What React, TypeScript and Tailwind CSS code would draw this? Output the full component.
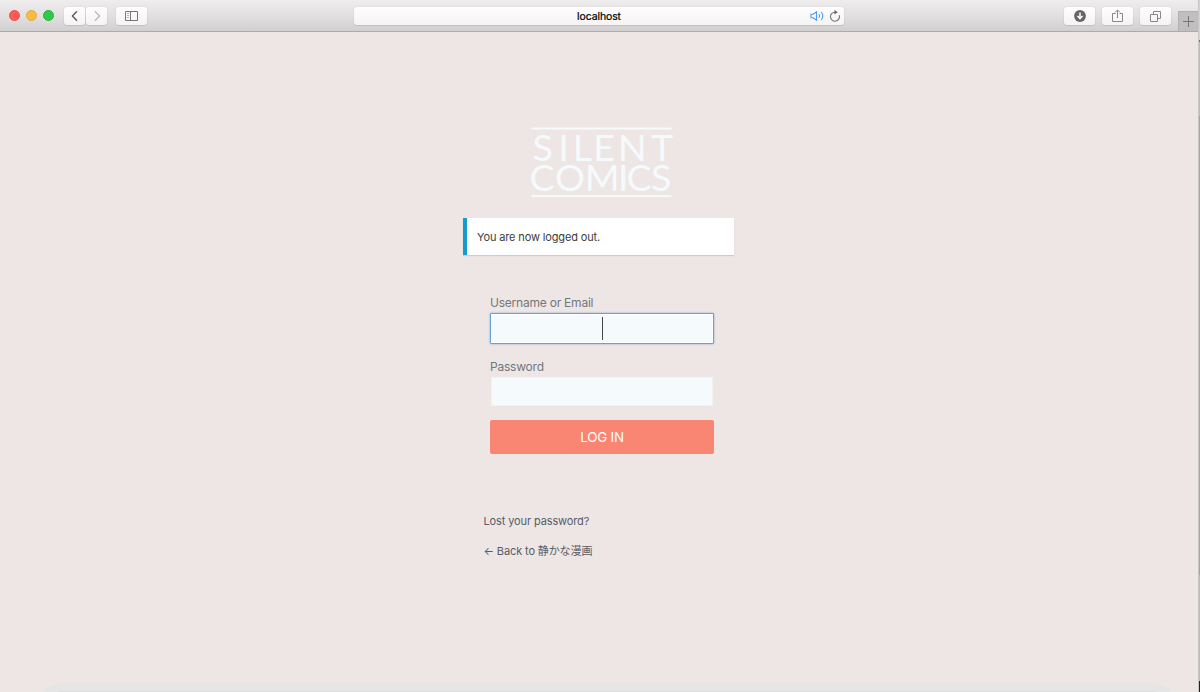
const btn = "flex h-[18px] shrink-0 items-center justify-center rounded-[3px] bg-gradient-to-b from-white to-[#f5f3f3] shadow-[0_0_1px_rgba(0,0,0,0.25),0_1px_1px_rgba(0,0,0,0.08)]";

function Toolbar() {
  return (
    <header className="flex h-8 w-[1198px] shrink-0 items-start rounded-tr-[5px] border-b border-[#ababab] bg-gradient-to-b from-[#efedee] via-[#e2e0e1] to-[#d1cfd0] pt-[7px]">
      <div className="ml-[9px] mt-[3px] flex gap-[6px]">
        <span className="size-[11px] rounded-full border-[0.5px] border-[#e4534f] bg-[#fc5b57]" />
        <span className="size-[11px] rounded-full border-[0.5px] border-[#e5aa38] bg-[#fdbb3f]" />
        <span className="size-[11px] rounded-full border-[0.5px] border-[#28b53c] bg-[#30c848]" />
      </div>
      <div className="ml-[10px] flex gap-px">
        <div className={`${btn} w-[21px]`}>
          <svg width="8" height="12" viewBox="0 0 8 12" fill="none" stroke="#555" strokeWidth="1.3"><path d="M6 1.2 1.4 6 6 10.8" /></svg>
        </div>
        <div className={`${btn} w-[21px]`}>
          <svg width="8" height="12" viewBox="0 0 8 12" fill="none" stroke="#b8b8b8" strokeWidth="1.3"><path d="M2 1.2 6.6 6 2 10.8" /></svg>
        </div>
      </div>
      <div className={`${btn} ml-[9px] w-[31px]`}>
        <svg width="13" height="10" viewBox="0 0 13 10" fill="none" stroke="#777"><path d="M.5.5h12v9H.5zM5.5.5v9" /><path d="M2 2.5h2M2 4.5h2M2 6.5h2" stroke="#a0a0a0" strokeWidth=".8" /></svg>
      </div>
      <div className={`${btn} relative ml-[207px] w-[490px] text-[10.5px] text-black`}>
        <span className="mt-px tracking-[-0.12px] [-webkit-text-stroke:0.2px_black]">localhost</span>
        <svg className="absolute left-[456px] top-[4px]" width="15" height="10" viewBox="0 0 15 10" fill="none" stroke="#4c9bee" strokeWidth="1.1"><path d="M1 3.3h2.2L6.5.8v8.4L3.2 6.7H1zM8.9 3.2q1.3 1.8 0 3.6M11.2 1q3.2 4 0 8" /></svg>
        <svg className="absolute left-[475px] top-[3px]" width="12" height="12" viewBox="0 0 12 12" fill="none" stroke="#747474" strokeWidth="1.1"><path d="M10.2 5.2A4.5 4.5 0 1 1 6 2.2" /><path d="M5.4 0 8.8 2.3 5.4 4.6z" fill="#666" stroke="none" /></svg>
      </div>
      <div className={`${btn} ml-[220px] w-[31px]`}>
        <svg width="12" height="12" viewBox="0 0 12 12"><circle cx="6" cy="6" r="5.9" fill="#656565" /><path d="M6 2.5v6M3.5 6 6 8.6 8.5 6" fill="none" stroke="white" strokeWidth="1.5" /></svg>
      </div>
      <div className={`${btn} ml-[7px] w-[31px]`}>
        <svg width="11" height="14" viewBox="0 0 11 14" fill="none" stroke="#888"><path d="M3.5 4.5h-3v8h10v-8h-3M5.5 9V1M3 3.4 5.5.9 8 3.4" /></svg>
      </div>
      <div className={`${btn} ml-[7px] w-[31px]`}>
        <svg width="11" height="11" viewBox="0 0 11 11" fill="none" stroke="#888"><path d="M.5 3.5h7v7h-7zM3.5 3.5v-3h7v7h-3" /></svg>
      </div>
      <div className="ml-[7px] mt-1 flex h-5 w-5 items-center justify-center border-l border-t border-[#b2b0b1] bg-[#c0bebf]">
        <svg width="11" height="11" viewBox="0 0 11 11" stroke="#777"><path d="M0 5.5h11M5.5 0v11" /></svg>
      </div>
    </header>
  );
}

function Logo() {
  return (
    <svg className="ml-[531px] mt-[95px] block shrink-0 overflow-visible" width="141" height="71" viewBox="0 0 141 71" fill="#f5fafc" fontFamily="Lato" fontSize="37.5" role="img" aria-label="Silent Comics">
      <rect x="0.5" y="0.6" width="140" height="1.9" />
      <text y="34" x="1.5 27.2 41.8 62.2 87 120">SILENT</text>
      <text y="64" x="-1.5 24 53.8 87 95.5 120">COMICS</text>
      <rect x="0.5" y="68.2" width="140" height="1.9" />
    </svg>
  );
}

export default function App() {
  return (
    <div className="flex h-[692px] w-[1200px] overflow-hidden bg-[#d5d3d4] font-['Inter','Noto_Sans_CJK_JP',sans-serif]">
      <div className="flex w-[1198px] shrink-0 flex-col bg-[#eee6e5]">
        <Toolbar />
        <Logo />
        <div className="ml-[463px] mt-[20px] flex h-[37px] w-[271px] shrink-0 items-center border-l-4 border-[#129dd0] bg-white pl-[10px] pt-px text-[11px] tracking-[-0.14px] text-[#3c3e40] shadow-[0_1px_1px_rgba(0,0,0,0.12)]">You are now logged out.</div>
        <form className="ml-[490px] mt-[40px] flex w-[224px] shrink-0 flex-col text-[12px] leading-[16px] tracking-[-0.22px] text-[#72777c]">
          <label>Username or Email</label>
          <div className="mt-[2px] flex h-[31px] items-center justify-center rounded-[1px] border border-[#64a3d8] bg-[#f5fafd] shadow-[0_0_2px_rgba(80,150,215,0.8),inset_0_0_0_1px_white]">
            <span className="ml-px h-[23px] w-px bg-[#444]" />
          </div>
          <label className="mt-[15px]">Password</label>
          <div className="ml-px mt-[2px] h-[29px] w-[222px] border border-[#f2f2f2] bg-[#f5fafd]" />
          <button type="button" className="mt-[14px] h-[34px] rounded-[2px] bg-[#f98573] text-[13.4px] text-white">LOG IN</button>
        </form>
        <nav className="ml-[483.5px] mt-[59px] flex flex-col gap-[14px] text-[11px] leading-4 tracking-[-0.12px] text-[#555d66]">
          <a>Lost your password?</a>
          <a>← Back to 静かな漫画</a>
        </nav>
        <svg className="mt-auto block shrink-0" width="1198" height="9" viewBox="0 0 1198 9"><path d="M42 9Q52 0 64 0H1151Q1166 3 1174 9z" fill="#e5e5e5" /><path d="M57 9 61 8H1154l4 1z" fill="#dedede" /></svg>
      </div>
      <div className="flex w-[2px] shrink-0 flex-col border-l border-[#c9c6c6]">
        <span className="h-10 bg-[#d5d3d4]" />
        <span className="h-[2px] bg-[#737373]" />
        <span className="h-[74px] bg-[#bcbcbc]" />
        <span className="h-[459px] bg-[#a6a4a4]" />
        <span className="h-[106px] bg-[#bababa]" />
        <span className="h-[11px] bg-[#142337]" />
      </div>
    </div>
  );
}
